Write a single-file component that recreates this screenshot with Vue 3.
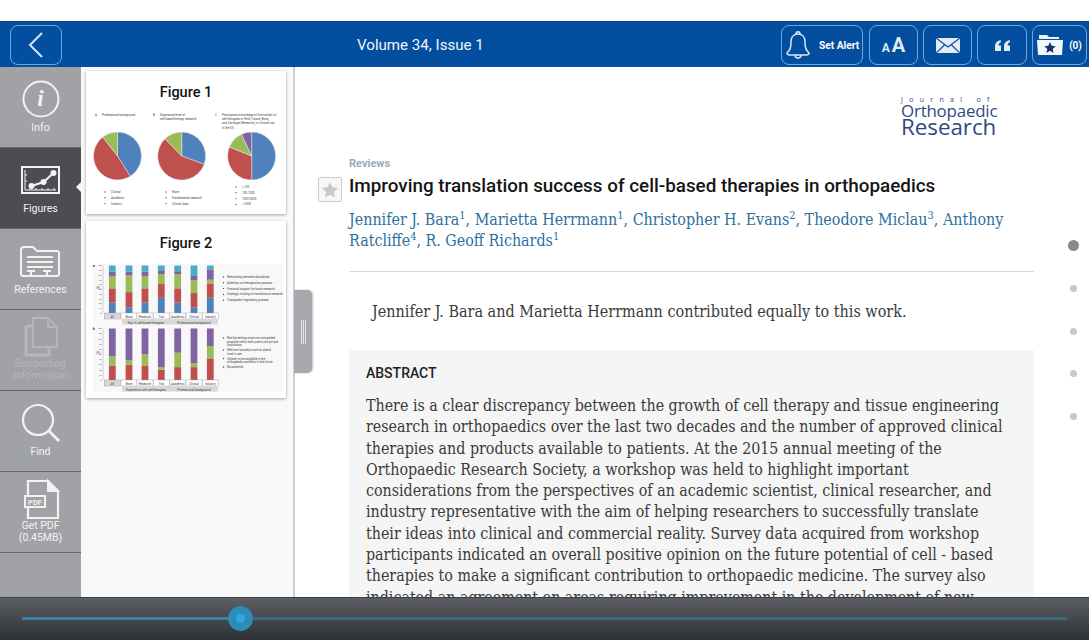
<template>
  <div class="page">
    <header class="topbar">
      <button class="hbtn back">
        <svg width="18" height="28" viewBox="0 0 18 28"><path d="M15 2 3 14l12 12" fill="none" stroke="#cfe6f7" stroke-width="2" /></svg>
      </button>
      <div class="issue">Volume 34, Issue 1</div>
      <div class="actions">
        <button class="hbtn alert">
          <svg width="26" height="30" viewBox="0 0 26 30" fill="none" stroke="#d7e8f6" stroke-width="1.5">
            <path d="M13 4c-5 0-7 4-7 8 0 6-1 8-4 11 0 1 1 2 3 2h16c2 0 3-1 3-2-3-3-4-5-4-11 0-4-2-8-7-8Z" />
            <path d="M11 4c0-3 4-3 4 0M10 25c0 4 6 4 6 0" />
          </svg>
          <span>Set Alert</span>
        </button>
        <button class="hbtn square aa"><small>A</small>A</button>
        <button class="hbtn square">
          <svg width="24" height="15" viewBox="0 0 24 15">
            <rect width="24" height="15" fill="#e3ecf5" />
            <path d="M0 0l12 9L24 0M0 15l9-8.500M24 15l-9-8.500" fill="none" stroke="#0a4f9e" stroke-width="1.200" />
          </svg>
        </button>
        <button class="hbtn square wide">
          <svg width="15" height="11" viewBox="0 0 15 11" fill="#e3ecf5">
            <path d="M0 11V6C0 3 2 1 5.500 0L6 2C4.500 2.800 3.500 4 3.500 5.500H6V11Z" />
            <path d="M9 11V6c0-3 2-5 5.500-6l.5 2c-1.500.8-2.500 2-2.500 3.500H15V11Z" />
          </svg>
        </button>
        <button class="hbtn folder">
          <svg width="26" height="20" viewBox="0 0 26 20">
            <path d="M2 4V0h8l2 2h10v2Z" fill="#e8f0f8" />
            <path d="M0 5h26l-1 15H1Z" fill="#f4f7fb" />
            <path d="m13 7 1.700 3.800 4 .4-3 2.700.9 4-3.600-2.100-3.600 2.100.9-4-3-2.700 4-.4Z" fill="#12366b" />
          </svg>
          <span>(0)</span>
        </button>
      </div>
    </header>

    <div class="body">
      <nav class="rail">
        <div
          v-for="item in railItems"
          :key="item.id"
          class="rail-item"
          :class="{ active: item.id === 'figures', off: item.id === 'supporting', compact: item.id === 'supporting' || item.id === 'pdf' }"
        >
          <svg class="rail-icon" width="44" :height="item.id === 'supporting' || item.id === 'pdf' ? 40 : 44" :viewBox="item.id === 'supporting' || item.id === 'pdf' ? '0 0 44 40' : '0 0 44 44'" fill="none" stroke="currentColor" stroke-width="2">
            <template v-if="item.id === 'info'">
              <circle cx="22" cy="22" r="17.500" />
              <text x="21.500" y="29" text-anchor="middle" class="info-i">i</text>
            </template>
            <template v-else-if="item.id === 'figures'">
              <rect x="3" y="9" width="37" height="26" />
              <path d="M12.500 28 24.500 24 34.500 15" />
              <circle cx="12.500" cy="28" r="3" fill="currentColor" stroke="none" />
              <circle cx="24.500" cy="24" r="3" fill="currentColor" stroke="none" />
              <circle cx="34.500" cy="15" r="3" fill="currentColor" stroke="none" />
              <path d="M6 12v20M6 32h31M11 30v2M17 30v2M23 30v2M29 30v2M35 30v2M6 17h2M6 23h2" stroke-width="1" />
            </template>
            <template v-else-if="item.id === 'references'">
              <path d="M4 37c-1 0-2-1-2-2V11c0-2 1-3 3-3h9l4 4h20c1 0 2 1 2 2v21c0 1-1 2-2 2Z" />
              <path d="M8 18h26M8 23h26M8 28h26" />
              <path d="M8 32h8M24 32h8M12 32v5M28 32v5" />
            </template>
            <template v-else-if="item.id === 'supporting'">
              <path d="M14 1h15l9 9v20H14Z" />
              <path d="M29 1v9h9" />
              <path d="M7 9v29h23v-8M14 9H7" stroke-width="3" />
            </template>
            <template v-else-if="item.id === 'find'">
              <circle cx="19" cy="19" r="15" stroke-width="2.200" />
              <path d="M30 30 40 40" stroke-width="3" />
            </template>
            <template v-else>
              <path d="M9 2h20l10 10v27H9Z" stroke-width="2.200" />
              <path d="M29 2v10h10Z" fill="currentColor" />
              <rect x="6" y="17" width="20" height="11" fill="#a0a2a6" stroke-width="2" />
              <text x="16" y="25.500" text-anchor="middle" class="pdf-tag">PDF</text>
            </template>
          </svg>
          <div class="rail-label">
            <div v-for="line in item.label" :key="line">{{ line }}</div>
          </div>
        </div>
        <div class="rail-rest"></div>
      </nav>

      <aside class="thumbs">
        <div class="thumb">
          <svg width="200" height="143" viewBox="0 0 200 143">
            <text x="100" y="26" text-anchor="middle" class="fig-title">Figure 1</text>
            <g v-for="(pie, i) in pies" :key="i">
              <text :x="pie.capX" y="45" class="tiny">{{ pie.mark }}</text>
              <text v-for="(cap, c) in pie.caption" :key="cap" :x="pie.capX + 7" :y="45 + c * 4.200" class="tiny">{{ cap }}</text>
              <path v-for="s in pie.slices" :key="s.d" :d="s.d" :fill="s.fill" stroke="#e8e8e8" stroke-width=".5" />
              <g v-for="(leg, l) in pie.legend" :key="leg">
                <circle :cx="pie.legX" :cy="pie.legY + l * 5.800 - 1" r=".7" fill="#555" />
                <text :x="pie.legX + 6" :y="pie.legY + l * 5.800" class="tiny">{{ leg }}</text>
              </g>
            </g>
          </svg>
        </div>
        <div class="thumb">
          <svg width="200" height="177" viewBox="0 0 200 177">
            <text x="100" y="27" text-anchor="middle" class="fig-title">Figure 2</text>
            <rect x="7" y="43" width="190" height="128" fill="#f8f8f8" />
            <g v-for="chart in charts" :key="chart.top">
              <text x="7" :y="chart.top + 1" class="tiny strong">{{ chart.mark }}</text>
              <text x="10" :y="chart.top + chart.h / 2" class="tiny">(%)</text>
              <path :d="`M17 ${chart.top}V${chart.top + chart.h}`" stroke="#aaa" stroke-width=".5" />
              <text v-for="t in 11" :key="t" x="15.500" :y="chart.top + chart.h - ((t - 1) * chart.h) / 10 + 0.800" text-anchor="end" class="tiny axis">{{ (t - 1) * 10 }}</text>
              <g v-for="(bar, b) in chart.bars" :key="b">
                <rect v-for="seg in bar" :key="seg.y" :x="barX[b] - 3.400" :y="seg.y" width="6.800" :height="seg.h" :fill="seg.fill" />
                <rect :x="barX[b] - 8" :y="chart.top + chart.h" width="16" height="6" :fill="b === 0 ? '#d8d8d8' : '#fff'" stroke="#999" stroke-width=".4" />
                <text :x="barX[b]" :y="chart.top + chart.h + 4.500" text-anchor="middle" class="tiny">{{ barLabels[b] }}</text>
              </g>
              <rect x="36" :y="chart.top + chart.h + 6" width="48" height="5.500" fill="#d8d8d8" />
              <rect x="84" :y="chart.top + chart.h + 6" width="48" height="5.500" fill="#d8d8d8" />
              <text x="60" :y="chart.top + chart.h + 10.500" text-anchor="middle" class="tiny">{{ chart.left }}</text>
              <text x="108" :y="chart.top + chart.h + 10.500" text-anchor="middle" class="tiny">Professional background</text>
              <g v-for="note in chart.notes" :key="note.y">
                <circle v-if="note.bullet" cx="137.500" :cy="note.y - 1" r=".7" fill="#444" />
                <text x="141" :y="note.y" class="tiny">{{ note.text }}</text>
              </g>
            </g>
          </svg>
        </div>
        <div class="handle"><i></i><i></i><i></i></div>
      </aside>

      <main class="article">
        <div class="logo">
          <div class="logo-small">Journal of</div>
          <div class="logo-mid">Orthopaedic</div>
          <div class="logo-big">Research</div>
        </div>
        <div class="kicker">Reviews</div>
        <div class="title-row">
          <button class="star-btn">
            <svg width="18" height="18" viewBox="0 0 20 20"><path d="m10 1 2.700 6 6.500.7-4.900 4.400 1.400 6.400-5.700-3.300-5.700 3.300 1.400-6.400L.8 7.700 7.300 7Z" fill="#c9c9c9" /></svg>
          </button>
          <h1>Improving translation success of cell-based therapies in orthopaedics</h1>
        </div>
        <p class="authors">
          Jennifer J. Bara<sup>1</sup>, Marietta Herrmann<sup>1</sup>, Christopher H. Evans<sup>2</sup>, Theodore Miclau<sup>3</sup>, Anthony<br />
          Ratcliffe<sup>4</sup>, R. Geoff Richards<sup>1</sup>
        </p>
        <hr />
        <p class="note">Jennifer J. Bara and Marietta Herrmann contributed equally to this work.</p>
        <section class="abstract">
          <h2>ABSTRACT</h2>
          <div v-for="line in abstractLines" :key="line" class="abs-line">{{ line }}</div>
        </section>
        <div class="dots">
          <span class="dot current"></span>
          <span v-for="n in 4" :key="n" class="dot"></span>
        </div>
      </main>
    </div>

    <footer class="slider">
      <div class="track">
        <div class="knob"><span></span></div>
      </div>
    </footer>
  </div>
</template>

<script setup>
const railItems = [
  { id: "info", label: ["Info"] },
  { id: "figures", label: ["Figures"] },
  { id: "references", label: ["References"] },
  { id: "supporting", label: ["Supporting", "Information"] },
  { id: "find", label: ["Find"] },
  { id: "pdf", label: ["Get PDF", "(0.45MB)"] },
];

const BLUE = "#4f81bd";
const RED = "#c0504d";
const GREEN = "#9bbb59";
const PURPLE = "#8064a2";
const CYAN = "#4bacc6";

// stops are clockwise degrees from the top
const makePie = (opts) => {
  const r = 24;
  const cy = 85;
  const point = (deg) => {
    const a = (deg * Math.PI) / 180;
    return `${opts.cx + r * Math.sin(a)} ${cy - r * Math.cos(a)}`;
  };
  const slices = opts.stops.map((end, i) => {
    const start = i ? opts.stops[i - 1] : 0;
    const large = end - start > 180 ? 1 : 0;
    return {
      d: `M${opts.cx} ${cy}L${point(start)}A${r} ${r} 0 ${large} 1 ${point(end)}Z`,
      fill: [BLUE, RED, GREEN, PURPLE][i],
    };
  });
  return { ...opts, slices };
};

const pies = [
  makePie({
    cx: 31.5,
    stops: [148, 322, 360],
    mark: "A",
    capX: 9,
    caption: ["Professional background"],
    legX: 19,
    legY: 122,
    legend: ["Clinical", "Academic", "Industry"],
  }),
  makePie({
    cx: 95.7,
    stops: [110, 316, 360],
    mark: "B",
    capX: 67,
    caption: ["Experience level of", "cell-based therapy research"],
    legX: 80,
    legY: 122,
    legend: ["None", "Fundamental research", "Clinical data"],
  }),
  makePie({
    cx: 165.7,
    stops: [180, 292, 335, 360],
    mark: "C",
    capX: 129,
    caption: ["Participants knowledge of the number of", "cell-therapies in Field, Tissue, Bone,", "and Cartilage (Research), in clinical use", "in the US"],
    legX: 150,
    legY: 117,
    legend: ["< 100", "100-1000", "1000-5000", "> 5000"],
  }),
];

const barX = [26.3, 43, 59, 75.3, 91.7, 108, 124.3];
const barLabels = ["All", "None", "Research", "Trial", "Academic", "Clinical", "Industry"];

const stack = (top, h, values, fills) => {
  let y = top + h;
  return values.map((v, i) => {
    const segH = (v / 100) * h;
    y -= segH;
    return { y, h: segH, fill: fills[i] };
  });
};

const charts = [
  {
    top: 44.5,
    h: 47.5,
    mark: "a",
    left: "Exp. in cell-based therapies",
    notes: [
      { y: 57, text: "Networking between disciplines", bullet: true },
      { y: 62.8, text: "Attention on therapeutics process", bullet: true },
      { y: 68.6, text: "Financial support for basic research", bullet: true },
      { y: 74.4, text: "Strategic funding of translational research", bullet: true },
      { y: 80.2, text: "Transparent regulatory process", bullet: true },
    ],
    bars: [
      [22, 30, 26, 9, 13],
      [12, 32, 35, 8, 13],
      [22, 30, 26, 9, 13],
      [32, 29, 21, 8, 10],
      [22, 30, 30, 6, 12],
      [12, 30, 27, 9, 22],
      [32, 30, 8, 22, 8],
    ].map((v) => stack(44.5, 47.5, v, [BLUE, RED, GREEN, PURPLE, CYAN])),
  },
  {
    top: 107.5,
    h: 51.5,
    mark: "b",
    left: "Experience with cell therapies",
    notes: [
      { y: 118, text: "Not the setting most are unimpeded", bullet: true },
      { y: 121.5, text: "possible within both public and private" },
      { y: 125, text: "institutions" },
      { y: 130, text: "Well are favorably more to attend", bullet: true },
      { y: 133.5, text: "fund in use" },
      { y: 138.5, text: "Unlikely to be available in the", bullet: true },
      { y: 142, text: "orthopaedic workflow in the future" },
      { y: 147, text: "No potential", bullet: true },
    ],
    bars: [
      [28, 18, 54],
      [30, 8, 62],
      [28, 22, 50],
      [20, 5, 75],
      [25, 28, 47],
      [25, 8, 67],
      [42, 24, 34],
    ].map((v) => stack(107.5, 51.5, v, [RED, GREEN, PURPLE])),
  },
];

const abstractLines = [
  "There is a clear discrepancy between the growth of cell therapy and tissue engineering",
  "research in orthopaedics over the last two decades and the number of approved clinical",
  "therapies and products available to patients. At the 2015 annual meeting of the",
  "Orthopaedic Research Society, a workshop was held to highlight important",
  "considerations from the perspectives of an academic scientist, clinical researcher, and",
  "industry representative with the aim of helping researchers to successfully translate",
  "their ideas into clinical and commercial reality. Survey data acquired from workshop",
  "participants indicated an overall positive opinion on the future potential of cell - based",
  "therapies to make a significant contribution to orthopaedic medicine. The survey also",
  "indicated an agreement on areas requiring improvement in the development of new",
];
</script>

<style>
html,
body {
  margin: 0;
  background: #fff;
}
</style>

<style scoped>
.page {
  width: 1089px;
  height: 640px;
  display: flex;
  flex-direction: column;
  padding-top: 21px;
  box-sizing: border-box;
  overflow: hidden;
  font-family: Roboto, "Liberation Sans", sans-serif;
  background: #fff;
}

.topbar {
  height: 46px;
  flex: none;
  box-sizing: border-box;
  display: flex;
  align-items: center;
  padding: 2px 2px 0 10px;
  background: #044e9f;
  box-shadow: inset 0 1px 0 #0a3f7c;
}

.hbtn {
  height: 40px;
  box-sizing: border-box;
  display: flex;
  align-items: center;
  justify-content: center;
  padding: 0;
  background: none;
  border: 1.5px solid #67a9de;
  border-radius: 8px;
  color: #fff;
  font-family: inherit;
}

.back {
  width: 52px;
}

.issue {
  margin-left: 295px;
  font-size: 15.100px;
  color: #f2f6fb;
}

.actions {
  margin-left: auto;
  display: flex;
  gap: 5px;
}

.alert {
  width: 82px;
  margin-right: 1px;
  gap: 8px;
  font-size: 10.200px;
  font-weight: 700;
}

.square {
  width: 49px;
}

.square.wide {
  width: 50px;
}

.aa {
  align-items: baseline;
  padding-top: 7px;
  gap: 2px;
  font-size: 20px;
  font-weight: 700;
  color: #dfeaf5;
}

.aa small {
  font-size: 12px;
}

.folder {
  width: 55px;
  gap: 6px;
  font-size: 10px;
  font-weight: 700;
}

.body {
  flex: 1;
  display: flex;
  min-height: 0;
}

.rail {
  width: 81px;
  flex: none;
  display: flex;
  flex-direction: column;
  background: #a0a2a6;
}

.rail-item {
  position: relative;
  height: 81px;
  flex: none;
  box-sizing: border-box;
  display: flex;
  flex-direction: column;
  align-items: center;
  padding-top: 10px;
  border-bottom: 1px solid #66686c;
  color: #f2f2f2;
}

.rail-item.compact {
  padding-top: 7px;
}

.rail-item.active {
  background: #4c4d51;
}

.rail-item.active::after {
  content: "";
  position: absolute;
  right: 0;
  top: 34px;
  border: 5px solid transparent;
  border-right-color: #f6f6f6;
  border-left-width: 0;
}

.rail-item.off {
  color: #b4b6b9;
}

.rail-icon {
  flex: none;
}

.rail-label {
  margin-top: 1px;
  font-size: 10.500px;
  line-height: 12px;
  text-align: center;
}

.rail-rest {
  flex: 1;
}

.info-i {
  font-family: "Liberation Serif", serif;
  font-size: 23px;
  font-style: italic;
  font-weight: 700;
  fill: currentColor;
  stroke: none;
}

.pdf-tag {
  font-size: 7.500px;
  font-weight: 700;
  fill: currentColor;
  stroke: none;
}

.thumbs {
  position: relative;
  z-index: 2;
  width: 214px;
  flex: none;
  box-sizing: border-box;
  display: flex;
  flex-direction: column;
  gap: 7px;
  padding: 4px 0 0 5px;
  background: #f9f9f9;
  border-right: 2px solid #cfcfcf;
}

.thumb {
  width: 200px;
  background: #fff;
  box-shadow: 0 1px 3px rgba(0, 0, 0, 0.35);
  line-height: 0;
}

.fig-title {
  font-size: 14.500px;
  font-weight: 500;
  fill: #111;
}

.tiny {
  font-size: 3px;
  fill: #444;
}

.tiny.axis {
  font-size: 2.200px;
}

.tiny.strong {
  font-weight: 700;
  fill: #111;
}

.handle {
  position: absolute;
  left: 100%;
  margin-left: 1px;
  top: 223px;
  width: 18px;
  height: 83px;
  display: flex;
  align-items: center;
  justify-content: center;
  gap: 1px;
  background: #a6a9ad;
  border-radius: 0 5px 5px 0;
  box-shadow: 1px 0 2px rgba(0, 0, 0, 0.25);
}

.handle i {
  width: 1px;
  height: 24px;
  background: #e4e5e7;
}

.article {
  position: relative;
  flex: 1;
  min-width: 0;
  overflow: hidden;
  padding-left: 54px;
  padding-right: 55px;
  background: #fff;
}

.logo {
  width: 92px;
  margin-left: 552px;
  padding-top: 29px;
  color: #2f4a80;
  font-family: "Open Sans", sans-serif;
}

.logo-small {
  font-size: 7px;
  line-height: 8px;
  letter-spacing: 6.300px;
  white-space: nowrap;
}

.logo-mid {
  font-size: 16.900px;
  line-height: 14px;
  letter-spacing: -0.2px;
}

.logo-big {
  font-size: 22.300px;
  line-height: 17px;
}

.kicker {
  margin-top: 22px;
  font-size: 11px;
  font-weight: 700;
  line-height: 13px;
  color: #9caab8;
}

.title-row {
  position: relative;
  margin-top: 4px;
}

.star-btn {
  position: absolute;
  left: -31px;
  top: 3px;
  width: 24px;
  height: 25px;
  display: flex;
  align-items: center;
  justify-content: center;
  padding: 0;
  background: #f7f7f7;
  border: 1px solid #ccc;
  border-radius: 2px;
}

h1 {
  margin: 0;
  font-size: 18.850px;
  font-weight: 500;
  line-height: 24px;
  color: #151515;
  white-space: nowrap;
}

.authors,
.note,
.abs-line {
  font-family: "DejaVu Serif Condensed", "DejaVu Serif", serif;
}

.authors {
  margin: 11px 0 0;
  font-size: 15.900px;
  line-height: 21px;
  color: #2b6f9f;
  white-space: nowrap;
}

.authors sup {
  font-size: 11px;
  line-height: 0;
}

hr {
  margin: 20px 0 0;
  border: 0;
  border-top: 1px solid #d9d9d9;
}

.note {
  margin: 30px 0 0 23px;
  font-size: 16px;
  line-height: 20px;
  color: #3a3a3a;
  white-space: nowrap;
}

.abstract {
  margin-top: 28px;
  height: 300px;
  padding: 15px 17px 0;
  background: #f5f5f5;
}

h2 {
  margin: 0 0 14px;
  font-size: 14px;
  font-weight: 500;
  line-height: 16px;
  color: #222;
}

.abs-line {
  font-size: 15.850px;
  line-height: 21.300px;
  color: #3a3a3a;
  white-space: nowrap;
}

.dots {
  position: absolute;
  left: 773px;
  top: 173px;
  width: 10px;
  display: flex;
  flex-direction: column;
  align-items: center;
  gap: 35.700px;
}

.dot {
  width: 7px;
  height: 7px;
  border-radius: 50%;
  background: #c9c9c9;
}

.dot.current {
  width: 11px;
  height: 11px;
  margin-bottom: -1.700px;
  background: #8a8a8a;
}

.slider {
  height: 43px;
  flex: none;
  box-sizing: border-box;
  display: flex;
  align-items: center;
  padding: 0 22px 2px;
  background: linear-gradient(#5b5e62, #2d3136);
  border-top: 1px solid #3c3e41;
}

.track {
  position: relative;
  flex: 1;
  height: 3px;
  background: linear-gradient(90deg, #3a80a3 20%, #40687c 20%);
}

.knob {
  position: absolute;
  left: 206px;
  top: -11px;
  width: 25px;
  height: 25px;
  display: flex;
  align-items: center;
  justify-content: center;
  border-radius: 50%;
  background: #2e8cb9;
}

.knob span {
  width: 9px;
  height: 9px;
  border-radius: 50%;
  background: #2ea9de;
}
</style>
